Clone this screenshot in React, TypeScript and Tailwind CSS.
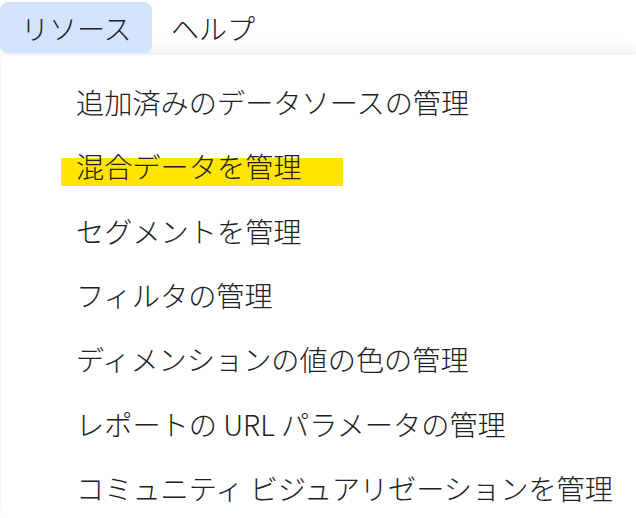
import React from "react";

const items = [
  "追加済みのデータソースの管理",
  "混合データを管理",
  "セグメントを管理",
  "フィルタの管理",
  "ディメンションの値の色の管理",
  "レポートの URL パラメータの管理",
  "コミュニティ ビジュアリゼーションを管理",
];

const font = { fontFamily: '"Noto Sans CJK JP", "Noto Sans", sans-serif' };

const App: React.FC = () => {
  return (
    <div className="w-[636px] h-[518px] bg-white overflow-hidden text-[#202124] font-light" style={font}>
      {/* Menu bar */}
      <div className="relative z-10 flex items-center h-[55px] pt-[2px] pb-[2px]">
        <div className="h-[51px] w-[152px] shrink-0 rounded-lg bg-[#d3e3fd] flex items-center pl-[21px] text-[28px] leading-none whitespace-nowrap">
          リソース
        </div>
        <div className="ml-[19px] text-[28px] leading-none whitespace-nowrap">ヘルプ</div>
      </div>

      {/* Dropdown */}
      <div className="relative bg-white rounded-tl-md shadow-[0_-6px_14px_rgba(0,0,0,0.07)] pt-[15px] ml-px">
        {items.map((label, i) => (
          <div key={i} className="relative h-[64.3px] flex items-center pl-[75px] text-[28.2px] leading-none whitespace-nowrap">
            {i === 1 && (
              <div className="absolute left-[60px] top-[24px] w-[282px] h-[28px] bg-[#ffe500]" />
            )}
            <span className="relative">{label}</span>
          </div>
        ))}
      </div>
    </div>
  );
};

export default App;
